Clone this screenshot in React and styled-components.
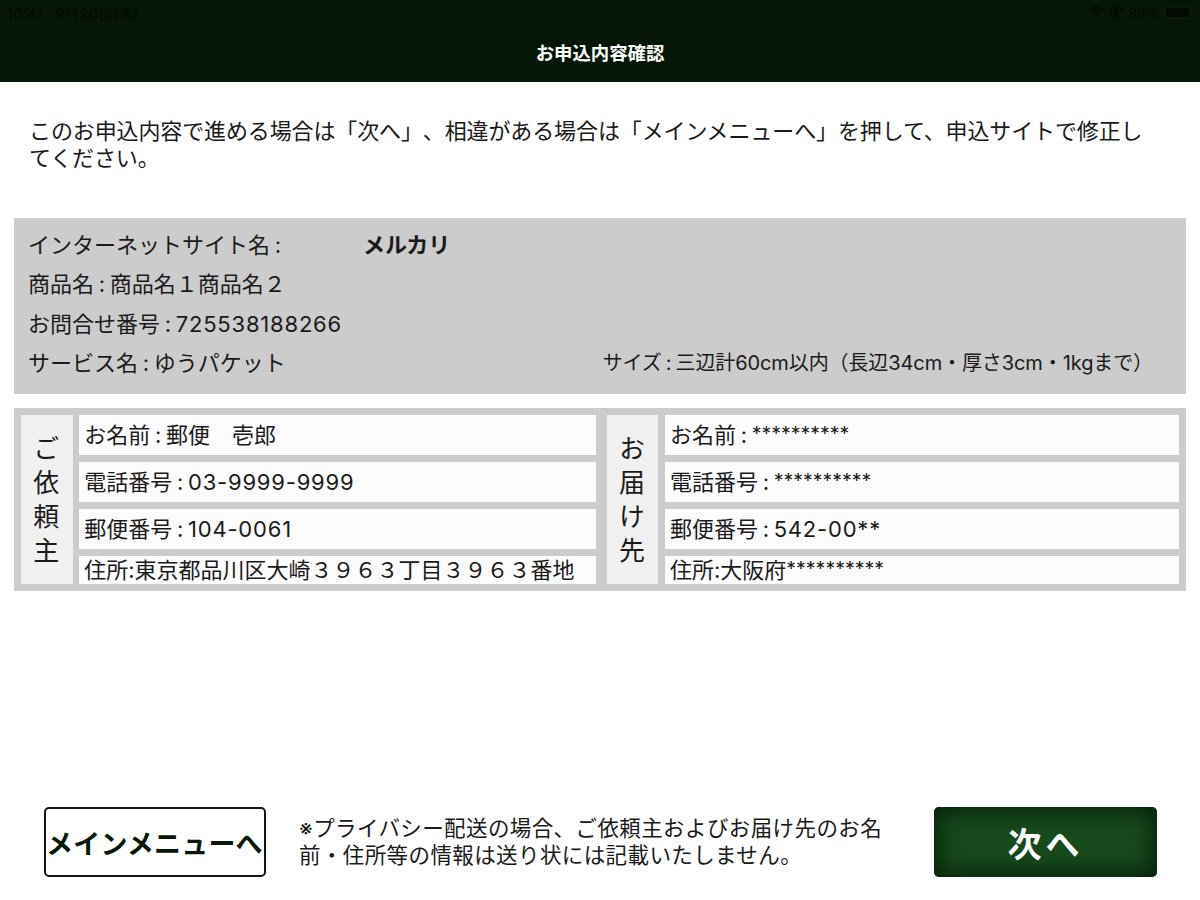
import React from "react";
import styled, { createGlobalStyle } from "styled-components";

const GlobalStyle = createGlobalStyle`
  html, body {
    margin: 0;
    padding: 0;
    background: #fff;
  }
  body {
    font-family: "Inter", "Noto Sans CJK JP", sans-serif;
    color: #1a1a1a;
    text-spacing-trim: space-all;
  }
`;

const Page = styled.div`
  width: 1200px;
  height: 900px;
  display: flex;
  flex-direction: column;
  overflow: hidden;
`;

const Header = styled.header`
  height: 82px;
  background: #071707;
  display: flex;
  flex-direction: column;
  flex-shrink: 0;
`;

const StatusBar = styled.div`
  height: 24px;
  padding: 0 6px 0 7px;
  display: flex;
  align-items: center;
  justify-content: space-between;
  color: #020a02;
  font-size: 14px;
`;

const StatusTime = styled.span`
  font-size: 15px;
`;

const StatusRight = styled.div`
  display: flex;
  align-items: center;
  gap: 5px;
`;

const Title = styled.h1`
  margin: 0;
  flex: 1;
  display: flex;
  align-items: center;
  justify-content: center;
  padding-bottom: 3px;
  color: #fff;
  font-size: 18.4px;
  font-weight: 700;
`;

const Intro = styled.p`
  margin: 0;
  padding: 34px 48px 0 29px;
  height: 136px;
  box-sizing: border-box;
  font-family: "Noto Sans CJK JP", sans-serif;
  font-size: 22px;
  line-height: 27px;
  letter-spacing: -0.12px;
`;

const InfoPanel = styled.section`
  margin: 0 14px;
  height: 176px;
  box-sizing: border-box;
  padding: 5px 33px 13px 14px;
  background: #ccc;
  display: flex;
  flex-direction: column;
  font-size: 22px;
  word-spacing: -1.5px;
`;

const InfoRow = styled.div`
  flex: 1;
  display: flex;
  align-items: center;
  justify-content: ${(p) => (p.$spread ? "space-between" : "flex-start")};
  white-space: nowrap;
`;

const SiteLabel = styled.span`
  width: 335px;
`;

const SiteName = styled.strong`
  font-weight: 700;
`;

const SizeNote = styled.span`
  font-size: 20px;
  letter-spacing: -0.1px;
`;

const Num = styled.span`
  letter-spacing: 0.8px;
`;

const Mask = styled.span`
  font-size: 19.5px;
  position: relative;
  top: -2px;
`;

const AddressPanel = styled.section`
  margin: 14px 14px 0;
  padding: 7px;
  background: #ccc;
  display: grid;
  grid-template-columns: 575px 572.3px;
  column-gap: 10.7px;
`;

const Party = styled.div`
  display: flex;
  gap: 6.6px;
`;

const PartyLabel = styled.div`
  width: 51.7px;
  flex-shrink: 0;
  box-sizing: border-box;
  padding: 6px 5px 0 0;
  background: #f0f0f0;
  display: flex;
  align-items: center;
  justify-content: center;
  writing-mode: vertical-rl;
  font-size: 26px;
  letter-spacing: 8px;
`;

const Fields = styled.div`
  flex: 1;
  display: grid;
  grid-template-rows: 40px 40px 40px 28px;
  row-gap: 7px;
`;

const Field = styled.div`
  background: #fcfcfc;
  padding: 0 5px;
  font-size: 22px;
  word-spacing: -1.5px;
  line-height: ${(p) => (p.$short ? 28 : 40)}px;
  white-space: nowrap;
  overflow: hidden;
`;

const Footer = styled.footer`
  margin-top: auto;
  padding: 0 43px 23px 44px;
  display: flex;
  align-items: center;
`;

const MenuButton = styled.button`
  width: 222px;
  height: 70px;
  flex-shrink: 0;
  padding: 0 2px 0 0;
  box-sizing: border-box;
  background: #fff;
  border: 2px solid #0c1c0c;
  border-radius: 5px;
  color: #071707;
  font-family: inherit;
  font-size: 27px;
  font-weight: 700;
  letter-spacing: 0.2px;
  white-space: nowrap;
`;

const Note = styled.p`
  margin: 0 44px 0 33px;
  flex: 1;
  font-size: 21.5px;
  line-height: 27px;
  letter-spacing: 0.4px;
`;

const NextButton = styled.button`
  width: 223px;
  height: 70px;
  flex-shrink: 0;
  border: none;
  border-radius: 5px;
  background: #174a1d;
  box-shadow: inset 0 0 22px 4px #061f08;
  color: #fff;
  font-family: inherit;
  font-size: 34px;
  font-weight: 700;
  letter-spacing: 4px;
`;

const WifiIcon = () => (
  <svg width="16" height="13" viewBox="0 0 16 13" fill="#020a02">
    <path d="M8 12.5 5.6 9.6a3.6 3.6 0 0 1 4.8 0Z" />
    <path d="M4.5 8.3 3 6.6a7.4 7.4 0 0 1 10 0l-1.5 1.7a5.2 5.2 0 0 0-7 0Z" />
    <path d="M1.9 5.3.4 3.6a11.3 11.3 0 0 1 15.2 0l-1.5 1.7a9 9 0 0 0-12.2 0Z" />
  </svg>
);

const RotationLockIcon = () => (
  <svg width="14" height="14" viewBox="0 0 14 14" fill="none" stroke="#020a02">
    <path d="M11.5 11A6 6 0 1 1 13 7" strokeWidth="1.4" />
    <path d="M11 5.8h3.6L12.8 8Z" fill="#020a02" stroke="none" />
    <rect x="4.5" y="6.2" width="5" height="4" fill="#020a02" stroke="none" />
    <path d="M5.5 6.2V5a1.5 1.5 0 0 1 3 0v1.2" strokeWidth="1" />
  </svg>
);

const BatteryIcon = () => (
  <svg width="30" height="13" viewBox="0 0 30 13">
    <rect x="0.5" y="0.5" width="26" height="12" rx="3" fill="none" stroke="#0e1f0e" />
    <rect x="2" y="2" width="23" height="9" rx="1.5" fill="#020a02" />
    <rect x="28" y="4.5" width="1.5" height="4" rx="0.7" fill="#0e1f0e" />
  </svg>
);

export default function App() {
  return (
    <Page>
      <GlobalStyle />
      <Header>
        <StatusBar>
          <StatusTime>10:41&nbsp;&nbsp;&nbsp;9月26日(木)</StatusTime>
          <StatusRight>
            <WifiIcon />
            <RotationLockIcon />
            <span>99%</span>
            <BatteryIcon />
          </StatusRight>
        </StatusBar>
        <Title>お申込内容確認</Title>
      </Header>

      <Intro>
        このお申込内容で進める場合は「次へ」、相違がある場合は「メインメニューへ」を押して、申込サイトで修正してください。
      </Intro>

      <InfoPanel>
        <InfoRow>
          <SiteLabel>インターネットサイト名 :</SiteLabel>
          <SiteName>メルカリ</SiteName>
        </InfoRow>
        <InfoRow>商品名 : 商品名１商品名２</InfoRow>
        <InfoRow>
          <span>お問合せ番号 : <Num>725538188266</Num></span>
        </InfoRow>
        <InfoRow $spread>
          <span>サービス名 : ゆうパケット</span>
          <SizeNote>サイズ : 三辺計60cm以内（長辺34cm・厚さ3cm・1kgまで）</SizeNote>
        </InfoRow>
      </InfoPanel>

      <AddressPanel>
        <Party>
          <PartyLabel>ご依頼主</PartyLabel>
          <Fields>
            <Field>お名前 : 郵便　壱郎</Field>
            <Field>電話番号 : <Num>03-9999-9999</Num></Field>
            <Field>郵便番号 : <Num>104-0061</Num></Field>
            <Field $short>住所:東京都品川区大崎３９６３丁目３９６３番地</Field>
          </Fields>
        </Party>
        <Party>
          <PartyLabel>お届け先</PartyLabel>
          <Fields>
            <Field>お名前 : <Mask>**********</Mask></Field>
            <Field>電話番号 : <Mask>**********</Mask></Field>
            <Field>郵便番号 : <Num>542-00**</Num></Field>
            <Field $short>住所:大阪府<Mask>**********</Mask></Field>
          </Fields>
        </Party>
      </AddressPanel>

      <Footer>
        <MenuButton>メインメニューへ</MenuButton>
        <Note>※プライバシー配送の場合、ご依頼主およびお届け先のお名前・住所等の情報は送り状には記載いたしません。</Note>
        <NextButton>次へ</NextButton>
      </Footer>
    </Page>
  );
}
